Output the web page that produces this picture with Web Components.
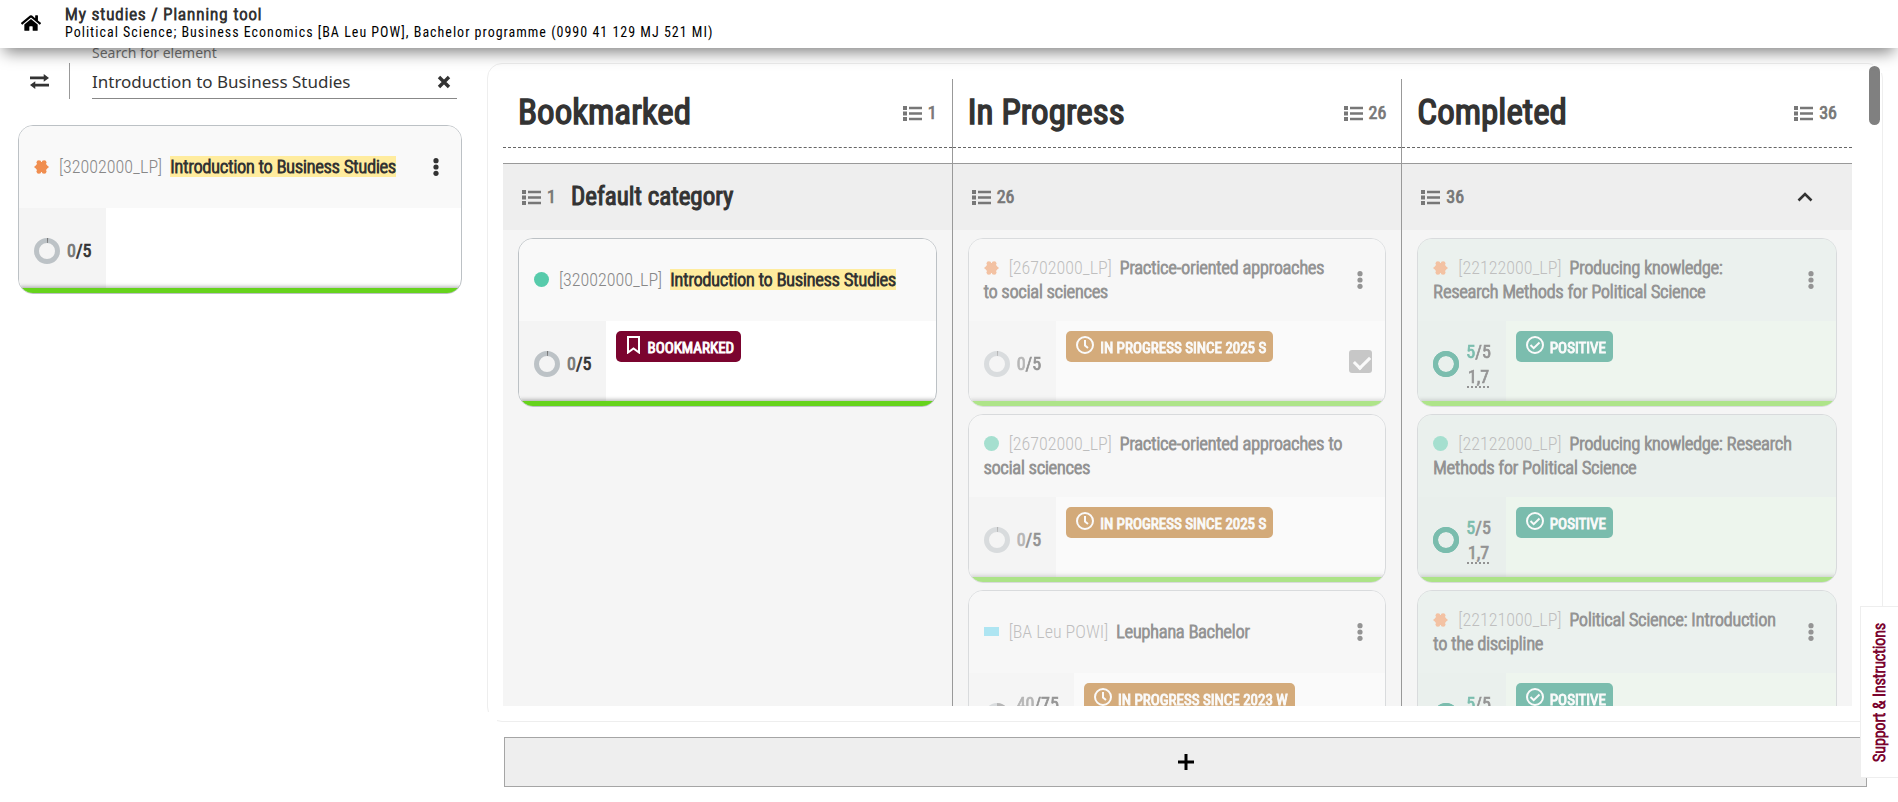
<!DOCTYPE html>
<html lang="en">
<head>
<meta charset="utf-8">
<title>Planning tool</title>
<style>
body { margin: 0; background: #fff; color: #333; font: 400 18px/24px "Roboto Condensed", Roboto, "Liberation Sans Narrow", sans-serif; --heavy: .04em currentColor; --heavier: .06em currentColor; }
</style>
</head>
<body>
<planning-app>
  <app-header slot="header">
    <span slot="title">My studies / Planning tool</span>
    <span slot="programme">Political Science; Business Economics [BA Leu POW], Bachelor programme (0990 41 129 MJ 521 MI)</span>
  </app-header>
  <search-panel slot="side" label="Search for element" value="Introduction to Business Studies">
    <course-card code="[32002000_LP]" shape="star" menu credits="0" total="5"><mark>Introduction to Business Studies</mark></course-card>
  </search-panel>
  <plan-board slot="board">
    <board-column heading="Bookmarked" count="1" category="Default category">
      <course-card code="[32002000_LP]" shape="circle" credits="0" total="5"><mark>Introduction to Business Studies</mark><status-badge slot="status" kind="bookmark">BOOKMARKED</status-badge></course-card>
    </board-column>
    <board-column heading="In Progress" count="26">
      <course-card faded code="[26702000_LP]" shape="star" menu selectable credits="0" total="5">Practice-oriented approaches to social sciences<status-badge slot="status" kind="clock">IN PROGRESS SINCE 2025 S</status-badge></course-card>
      <course-card faded code="[26702000_LP]" shape="circle" credits="0" total="5">Practice-oriented approaches to social sciences<status-badge slot="status" kind="clock">IN PROGRESS SINCE 2025 S</status-badge></course-card>
      <course-card faded code="[BA Leu POWI]" shape="bar" menu credits="40" total="75" grade="&nbsp;">Leuphana Bachelor<status-badge slot="status" kind="clock">IN PROGRESS SINCE 2023 W</status-badge></course-card>
    </board-column>
    <board-column heading="Completed" count="36" collapsible>
      <course-card faded done code="[22122000_LP]" shape="star" menu credits="5" total="5" grade="1,7">Producing knowledge: Research Methods for Political Science<status-badge slot="status" kind="check">POSITIVE</status-badge></course-card>
      <course-card faded done code="[22122000_LP]" shape="circle" credits="5" total="5" grade="1,7">Producing knowledge: Research Methods for Political Science<status-badge slot="status" kind="check">POSITIVE</status-badge></course-card>
      <course-card faded done code="[22121000_LP]" shape="star" menu credits="5" total="5" grade="&nbsp;">Political Science: Introduction to the discipline<status-badge slot="status" kind="check">POSITIVE</status-badge></course-card>
    </board-column>
  </plan-board>
  <support-tab slot="support">Support &amp; Instructions</support-tab>
</planning-app>

<script>
const ICONS = {
  home: ['0 0 576 512', '<path fill="currentColor" d="M280.37 148.26L96 300.11V464a16 16 0 0 0 16 16l112.06-.29a16 16 0 0 0 15.92-16V368a16 16 0 0 1 16-16h64a16 16 0 0 1 16 16v95.64a16 16 0 0 0 16 16.05L464 480a16 16 0 0 0 16-16V300L295.67 148.26a12.19 12.19 0 0 0-15.3 0zM571.6 251.47L488 182.56V44.05a12 12 0 0 0-12-12h-56a12 12 0 0 0-12 12v72.61L318.47 43a48 48 0 0 0-61 0L4.34 251.47a12 12 0 0 0-1.6 16.9l25.5 31A12 12 0 0 0 45.15 301l235.22-193.74a12.19 12.19 0 0 1 15.3 0L530.9 301a12 12 0 0 0 16.9-1.6l25.5-31a12 12 0 0 0-1.7-16.93z"/>', 20, 18],
  swap: ['0 0 18 14', '<path fill="currentColor" d="M0 2.300h13V0l5 3.600-5 3.600V4.900H0zM18 11.700H5V14l-5-3.600 5-3.600v2.300h13z"/>', 19, 15],
  close: ['0 0 14 14', '<path fill="none" stroke="currentColor" stroke-width="3.400" d="M2 2l10 10M12 2L2 12"/>', 14, 14],
  list: ['0 0 19 15', '<path fill="currentColor" d="M0 0h4v4H0zM0 5.500h4v4H0zM0 11h4v4H0zM6 .8h13v2.400H6zM6 6.300h13v2.400H6zM6 11.800h13v2.400H6z"/>', 19, 15],
  dots: ['0 0 6 18', '<g fill="currentColor"><circle cx="3" cy="2.700" r="2.600"/><circle cx="3" cy="9" r="2.600"/><circle cx="3" cy="15.300" r="2.600"/></g>', 6, 18],
  up: ['0 0 16 10', '<path fill="none" stroke="currentColor" stroke-width="2.600" d="M1.500 8.500L8 2l6.500 6.500"/>', 16, 10],
  plus: ['0 0 16 16', '<path fill="none" stroke="currentColor" stroke-width="3" d="M8 0v16M0 8h16"/>', 16, 16],
  bookmark: ['0 0 15 18', '<path fill="none" stroke="currentColor" stroke-width="2" d="M2 1h11v15.500l-5.500-4-5.500 4z"/>', 15, 18],
  clock: ['0 0 18 18', '<g fill="none" stroke="currentColor" stroke-width="2"><circle cx="9" cy="9" r="8"/><path d="M9 4v5.500l3 2.500"/></g>', 18, 18],
  check: ['0 0 18 18', '<g fill="none" stroke="currentColor" stroke-width="2"><circle cx="9" cy="9" r="8"/><path d="M4.500 9l3.200 3.200L13.500 6.500"/></g>', 18, 18],
  star: ['0 0 15 14', '<g fill="#f08e50"><ellipse cx="7.500" cy="7" rx="5.600" ry="5"/><circle cx="4.900" cy="2.600" r="2.400"/><circle cx="10.100" cy="2.600" r="2.400"/><circle cx="4.900" cy="11.400" r="2.400"/><circle cx="10.100" cy="11.400" r="2.400"/><path d="M0 7l3.500-3h8L15 7l-3.500 3h-8z"/></g>', 15, 14],
  circle: ['0 0 15 15', '<circle cx="7.500" cy="7.500" r="7.500" fill="#57cbab"/>', 15, 15],
  bar: ['0 0 15 14', '<path fill="#66d4ee" d="M0 2h15v9H0z"/>', 15, 14]
};
const icon = name => {
  const [box, body, w, h] = ICONS[name];
  return `<svg viewBox="${box}" width="${w}" height="${h}" aria-hidden="true">${body}</svg>`;
};
const define = (tag, render) => customElements.define(tag, class extends HTMLElement {
  connectedCallback() {
    if (this.shadowRoot) return;
    const t = document.createElement('template');
    t.innerHTML = `<style>*{box-sizing:border-box}svg{display:block;flex:none}button{border:0;padding:0;background:none;color:inherit;font:inherit;cursor:pointer}</style>` + render(this);
    this.attachShadow({ mode: 'open' }).append(t.content.cloneNode(true));
  }
});

define('planning-app', () => `
<style>
:host { display: flex; flex-direction: column; height: 100vh; min-height: 480px; overflow: hidden; position: relative; }
main { flex: 1; min-height: 0; display: grid; grid-template-columns: 462px minmax(0, 1fr); column-gap: 25px; }
</style>
<slot name="header"></slot>
<main><slot name="side"></slot><slot name="board"></slot></main>
<slot name="support"></slot>`);

define('app-header', () => `
<style>
:host { display: block; position: absolute; inset: 0 0 auto; z-index: 2; letter-spacing: 1px; }
header { display: flex; align-items: center; gap: 24px; height: 48px; padding: 0 21px 2px; background: #fff; box-shadow: 0 8px 16px -4px rgba(0,0,0,.5); }
a { color: #000; }
h1, p { margin: 0; }
h1 { font-size: 17px; line-height: 18px; font-weight: 300; -webkit-text-stroke: var(--heavier); }
p { font-size: 14px; line-height: 18px; color: #000; }
</style>
<header><a href="#" aria-label="Home">${icon('home')}</a>
<div><h1><slot name="title"></slot></h1><p><slot name="programme"></slot></p></div></header>`);

define('search-panel', el => `
<style>
:host { display: block; padding: 44px 0 0 18px; }
form { display: flex; align-items: flex-end; padding: 0 5px 0 12px; }
.swap { height: 36px; width: 39px; color: #333; border-right: 1px solid #999; box-sizing: content-box; display: flex; align-items: center; }
.field { flex: 1; margin-left: 22px; }
label { display: block; font: 14px/18px "Noto Sans", sans-serif; color: #777; }
.line { display: flex; align-items: center; height: 37px; border-bottom: 1px solid #888; padding: 4px 6px 0 0; }
input { flex: 1; min-width: 0; border: 0; padding: 0; outline: 0; background: none; color: #333; font: 17px/24px "Noto Sans", sans-serif; }
.cards { margin-top: 26px; }
</style>
<form onsubmit="return false"><button class="swap" type="button" aria-label="Switch view">${icon('swap')}</button>
<div class="field"><label for="q">${el.getAttribute('label')}</label>
<div class="line"><input id="q" type="text" value="${el.getAttribute('value')}"><button type="button" aria-label="Clear">${icon('close')}</button></div></div></form>
<div class="cards"><slot></slot></div>`);

define('plan-board', () => `
<style>
:host { display: flex; flex-direction: column; padding: 63px 15px 15px 0; min-width: 0; min-height: 0; }
.panel { position: relative; flex: 1; min-height: 0; padding: 15px 30px 15px 15px; border: 1px solid #eee; border-radius: 15px; }
.panel::before, .panel::after { content: ""; position: absolute; width: 10px; height: 10px; background: #fff; }
.panel::before { left: -1px; bottom: -1px; }
.panel::after { right: -1px; top: -1px; }
.cols { height: 100%; display: grid; grid-template-columns: repeat(3, minmax(0, 1fr)); overflow: hidden; }
.thumb { position: absolute; top: 2px; right: 2px; z-index: 1; width: 11px; height: 59px; border-radius: 6px; background: #808080; }
.add { display: flex; align-items: center; justify-content: center; height: 50px; margin: 15px 16px 0 17px; border: 1px solid #a5a5a5; background: #eee; color: #000; }
</style>
<div class="panel"><div class="cols"><slot></slot></div><div class="thumb"></div></div>
<button class="add" type="button" aria-label="Add category">${icon('plus')}</button>`);

define('item-count', () => `
<style>:host { display: flex; align-items: center; gap: 6px; color: #777; -webkit-text-stroke: var(--heavy); } svg { -webkit-text-stroke: 0; }</style>
${icon('list')}<slot></slot>`);

define('board-column', el => `
<style>
:host { display: flex; flex-direction: column; min-width: 0; border-right: 1px solid #999; }
:host(:last-child) { border-right: 0; }
header { display: flex; align-items: center; justify-content: space-between; height: 69px; margin-bottom: 15px; padding: 0 15px; border-bottom: 1px dashed #666; }
h2, h3 { margin: 0; color: #333; font-weight: 400; -webkit-text-stroke: var(--heavy); }
h2 { font-size: 35px; line-height: 42px; }
h3 { font-size: 25px; line-height: 30px; }
.category { display: flex; align-items: center; gap: 15px; height: 67px; flex: none; padding: 0 39px 0 19px; border-top: 1px solid #999; background: #eee; }
.category button { margin-left: auto; }
.list { flex: 1; display: flex; flex-direction: column; gap: 7px; padding: 8px 15px; background: #f5f5f5; }
</style>
<header><h2>${el.getAttribute('heading')}</h2><item-count>${el.getAttribute('count')}</item-count></header>
<div class="category"><item-count>${el.getAttribute('count')}</item-count>
${el.hasAttribute('category') ? `<h3>${el.getAttribute('category')}</h3>` : ''}
${el.hasAttribute('collapsible') ? `<button type="button" aria-label="Collapse category">${icon('up')}</button>` : ''}</div>
<div class="list"><slot></slot></div>`);

define('status-badge', el => `
<style>
:host { display: inline-flex; align-items: center; gap: 6px; height: 31px; padding: 0 7px 0 10px; border-radius: 5px; background: #b36100; color: #fff; font-size: 15px; line-height: 20px; white-space: nowrap; }
:host([kind="bookmark"]) { background: #7b042f; }
:host([kind="check"]) { background: #018567; }
svg { margin-bottom: 3px; }
span { padding-top: 3px; -webkit-text-stroke: var(--heavier); }
</style>${icon(el.getAttribute('kind'))}<span><slot></slot></span>`);

define('course-card', el => {
  const a = n => el.getAttribute(n), has = n => el.hasAttribute(n);
  const len = 2 * Math.PI * 10.500, part = a('credits') / a('total') * len;
  return `
<style>
:host { display: block; flex: none; --head: #f9f9f9; --meta: #f4f4f4; --body: #fff; --ring: #bcc2c6; --arc: #777; }
:host([done]) { --head: #e1ede7; --meta: #dfebe5; --body: #e7f5e7; --ring: #018567; --arc: #018567; }
:host([faded]) article { opacity: .5; }
article { position: relative; display: flex; flex-direction: column; height: 169px; overflow: hidden; border: 1px solid #bcc1c5; border-radius: 15px; background: var(--body); }
header { display: flex; align-items: center; height: 82px; flex: none; padding: 0 22px 1px 15px; background: var(--head); }
h4 { flex: 1; margin: 0; font-size: 18px; line-height: 24px; font-weight: 300; color: #333; -webkit-text-stroke: var(--heavier); }
h4 svg { display: inline-block; margin-right: 10px; vertical-align: -1px; }
.code { margin-right: 8px; color: #888; -webkit-text-stroke: 0; }
::slotted(mark) { background: #ffec9e; color: inherit; }
header button { margin-left: 26px; }
.body { flex: 1; display: flex; }
.meta { display: flex; align-items: center; gap: 7px; padding: 0 15px; background: var(--meta); -webkit-text-stroke: var(--heavy); line-height: 25px; }
.meta p { margin: 0; }
.meta b { font-weight: 400; color: #777; }
:host([done]) .meta b { color: #018567; }
.meta .grade { text-decoration: underline dotted; text-underline-offset: 4px; text-align: center; }
.status { flex: 1; padding: 10px; line-height: 0; }
input { appearance: none; position: relative; align-self: flex-start; width: 23px; height: 23px; margin: 29px 13px 0 0; border-radius: 3px; background: #999; }
input::after { content: ""; position: absolute; left: 8px; top: 3px; width: 7px; height: 13px; border: solid #fff; border-width: 0 3px 3px 0; transform: rotate(45deg); }
.strip { position: absolute; inset: auto 0 0; height: 5px; background: #66d31c; box-shadow: 0 -1px 4px rgba(0,0,0,.35); }
</style>
<article>
<header><h4>${icon(a('shape'))}<span class="code">${a('code')}</span><slot></slot></h4>
${has('menu') ? `<button type="button" aria-label="Open menu">${icon('dots')}</button>` : ''}</header>
<div class="body"><div class="meta">
<svg width="26" height="26" viewBox="0 0 26 26" fill="none" stroke-width="5" aria-hidden="true"><circle cx="13" cy="13" r="10.500" stroke="var(--ring)"/><circle cx="13" cy="13" r="10.500" stroke="var(--arc)" stroke-dasharray="${Math.max(part, 1)} ${len}" transform="rotate(-90 13 13)"/></svg>
<div><p><b>${a('credits')}</b>/${a('total')}</p>${has('grade') ? `<p class="grade">${a('grade')}</p>` : ''}</div></div>
<div class="status"><slot name="status"></slot></div>
${has('selectable') ? '<input type="checkbox" checked disabled aria-label="Selected">' : ''}</div>
<div class="strip"></div>
</article>`;
});

define('support-tab', () => `
<style>
:host { position: absolute; right: 0; bottom: 24px; z-index: 3; }
button { display: block; height: 172px; width: 38px; border: 1px solid #eee; border-left: 0; background: #fff; color: #7b042f; font-size: 16px; font-weight: 300; -webkit-text-stroke: var(--heavier); line-height: 20px; writing-mode: vertical-rl; transform: rotate(180deg); }
</style><button type="button"><slot></slot></button>`);
</script>
</body>
</html>
